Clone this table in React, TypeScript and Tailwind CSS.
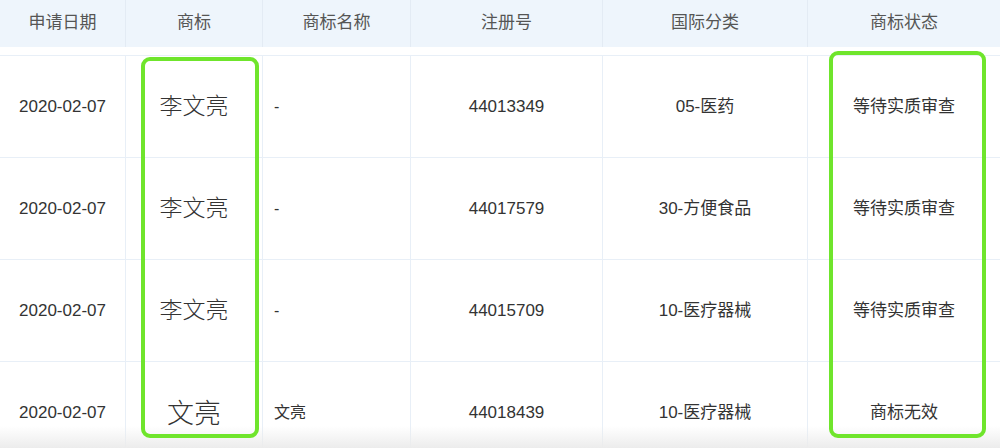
import React from "react";

const cols = [
  "w-[126px]",
  "w-[137px]",
  "w-[148px]",
  "w-[192px]",
  "w-[205px]",
  "flex-1",
];

const rows = [
  { date: "2020-02-07", mark: "李文亮", big: false, name: "-", no: "44013349", cls: "05-医药", status: "等待实质审查" },
  { date: "2020-02-07", mark: "李文亮", big: false, name: "-", no: "44017579", cls: "30-方便食品", status: "等待实质审查" },
  { date: "2020-02-07", mark: "李文亮", big: false, name: "-", no: "44015709", cls: "10-医疗器械", status: "等待实质审查" },
  { date: "2020-02-07", mark: "文亮", big: true, name: "文亮", no: "44018439", cls: "10-医疗器械", status: "商标无效" },
];

const headers = ["申请日期", "商标", "商标名称", "注册号", "国际分类", "商标状态"];

export default function App() {
  return (
    <div
      className="relative w-[1000px] h-[448px] overflow-hidden bg-white text-[#333]"
      style={{ fontFamily: '"Liberation Sans", "Noto Sans CJK SC", sans-serif' }}
    >
      <div className="flex h-[47px] bg-[#eef5fc]">
        {headers.map((h, i) => (
          <div
            key={h}
            className={`${cols[i]} flex items-center justify-center pb-[2px] text-[17px] text-[#555] ${i < 5 ? "border-r border-[#e3ebf4]" : ""}`}
          >
            {h}
          </div>
        ))}
      </div>
      <div className="h-[8px]" />
      <div className="border-t border-[#e8eff7]">
        {rows.map((r, idx) => (
          <div key={idx} className="flex h-[102px] border-b border-[#e8eff7]">
            <div className={`${cols[0]} flex items-center justify-center text-[17px] border-r border-[#e8eff7]`}>
              {r.date}
            </div>
            <div className={`${cols[1]} flex items-center justify-center border-r border-[#e8eff7]`}>
              <span
                className={`${r.big ? "text-[27px]" : "text-[23px] mb-[4px]"} font-light text-[#333]`}
                style={{ fontFamily: '"Noto Sans CJK SC", serif' }}
              >
                {r.mark}
              </span>
            </div>
            <div className={`${cols[2]} flex items-center pl-[11px] text-[16px] border-r border-[#e8eff7]`}>
              {r.name}
            </div>
            <div className={`${cols[3]} flex items-center justify-center text-[17px] border-r border-[#e8eff7]`}>
              {r.no}
            </div>
            <div className={`${cols[4]} flex items-center justify-center text-[17px] border-r border-[#e8eff7]`}>
              {r.cls}
            </div>
            <div className={`${cols[5]} flex items-center justify-center text-[17px]`}>
              {r.status}
            </div>
          </div>
        ))}
      </div>
      <div className="pointer-events-none absolute left-0 right-0 bottom-0 h-[22px] bg-gradient-to-b from-white/0 to-[#ececec]" />
      <div className="pointer-events-none absolute left-[141px] top-[57px] w-[118px] h-[381px] rounded-[9px] border-[4px] border-[#6fe52c]" />
      <div className="pointer-events-none absolute left-[829px] top-[51px] w-[157px] h-[387px] rounded-[9px] border-[4px] border-[#6fe52c]" />
    </div>
  );
}
